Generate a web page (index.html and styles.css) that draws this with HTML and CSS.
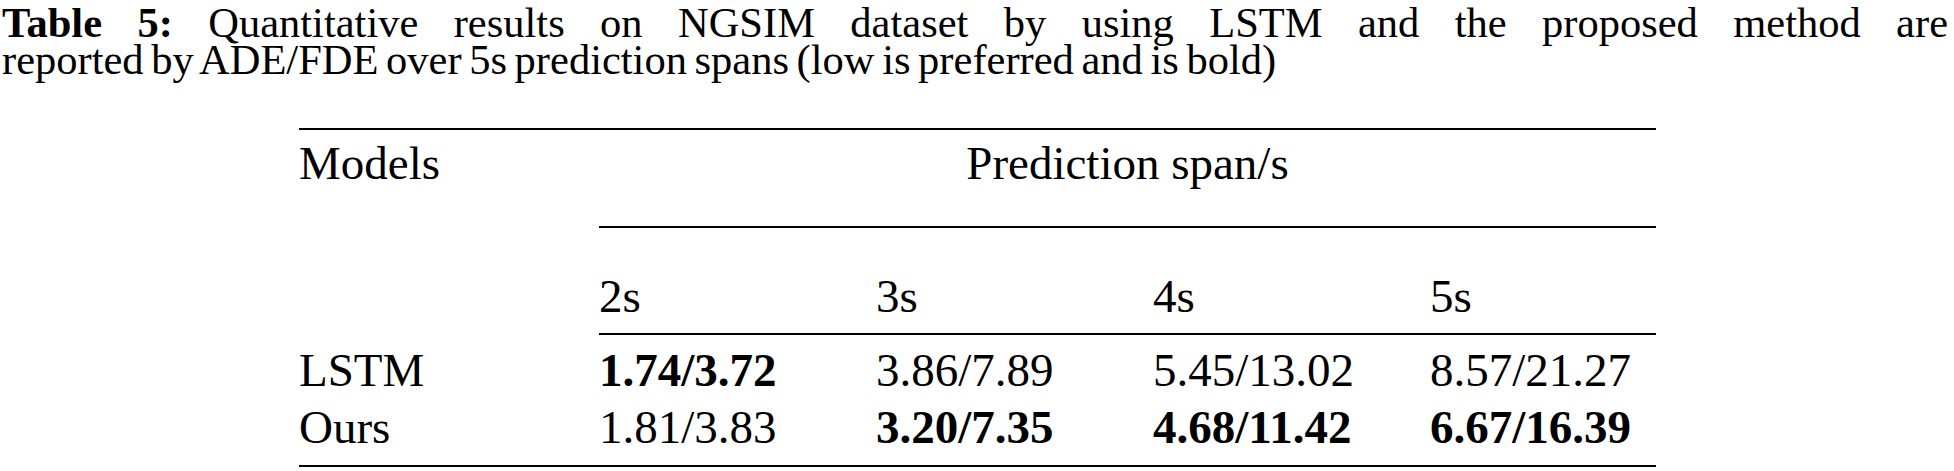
FILE: index.html
```html
<!DOCTYPE html>
<html lang="en">

<head>
    <meta charset="UTF-8">
    <title>Table 5</title>
    <link rel="stylesheet" href="styles.css">
</head>

<body>
    <div class="caption">
        <span class="caption-line"><b>Table 5:</b> Quantitative results on NGSIM dataset by using LSTM and the proposed method are</span>
        <span class="caption-last">reported by ADE/FDE over 5s prediction spans (low is preferred and is bold)</span>
    </div>

    <table class="results">
        <colgroup>
            <col class="col-model">
            <col class="col-span">
            <col class="col-span">
            <col class="col-span">
            <col class="col-last">
        </colgroup>
        <tr class="head-row">
            <td rowspan="2" class="model-head">Models</td>
            <td colspan="4" class="span-head">Prediction span/s</td>
        </tr>
        <tr class="sub-row">
            <td>2s</td>
            <td>3s</td>
            <td>4s</td>
            <td>5s</td>
        </tr>
        <tr class="first-row">
            <td>LSTM</td>
            <td><b>1.74/3.72</b></td>
            <td>3.86/7.89</td>
            <td>5.45/13.02</td>
            <td>8.57/21.27</td>
        </tr>
        <tr class="last-row">
            <td>Ours</td>
            <td>1.81/3.83</td>
            <td><b>3.20/7.35</b></td>
            <td><b>4.68/11.42</b></td>
            <td><b>6.67/16.39</b></td>
        </tr>
    </table>
</body>

</html>
```

FILE: styles.css
```css
body {
    margin: 0;
    padding: 0;
    background-color: #fff;
    color: #000;
    font-family: "Liberation Serif", "Times New Roman", serif;
}

.caption {
    padding: 4px 6px 0 2px;
    font-size: 42.5px;
    line-height: 37px;
}

.caption-line {
    display: block;
    text-align: justify;
    text-align-last: justify;
}

.caption-last {
    display: block;
    word-spacing: -3px;
}

.results {
    margin: 50px 0 0 299px;
    width: 1357px;
    border-collapse: collapse;
    table-layout: fixed;
    border-top: 2px solid #000;
    border-bottom: 2px solid #000;
    font-size: 47px;
    line-height: 52px;
}

.col-model {
    width: 300px;
}

.col-span {
    width: 277px;
}

.col-last {
    width: 226px;
}

.results td {
    padding: 0;
    text-align: left;
    white-space: nowrap;
}

.head-row td {
    padding-top: 7px;
    padding-bottom: 37px;
    vertical-align: top;
}

.span-head {
    text-align: center !important;
    border-bottom: 2px solid #000;
}

.sub-row td {
    padding-top: 42px;
    padding-bottom: 11px;
    border-bottom: 2px solid #000;
}

.first-row td {
    padding-top: 9px;
}

.last-row td {
    padding-top: 5px;
    padding-bottom: 12px;
}
```
